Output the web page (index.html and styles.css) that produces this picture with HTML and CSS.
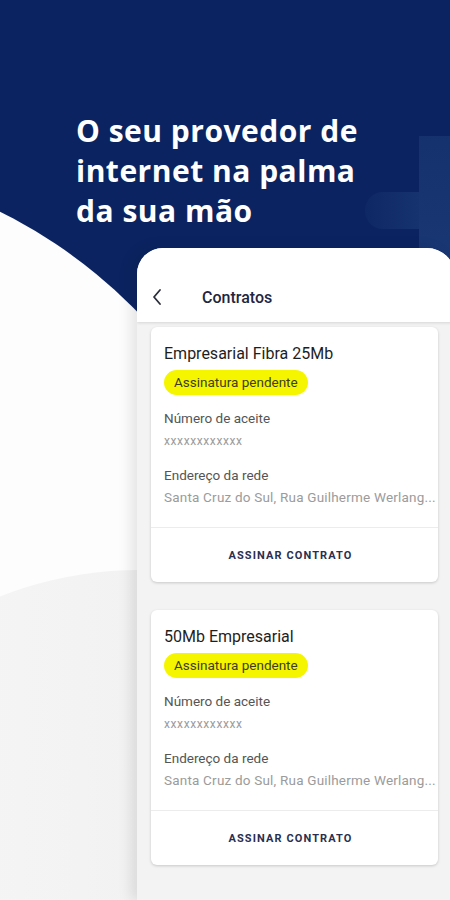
FILE: index.html
```html
<!DOCTYPE html>
<html lang="pt-BR">
<head>
<meta charset="utf-8">
<title>Contratos</title>
<link rel="stylesheet" href="styles.css">
</head>
<body>
<div class="screen">
  <div class="bg-circle"></div>
  <div class="bg-soft"></div>
  <div class="plus-v"></div>
  <div class="plus-h"></div>

  <h1 class="headline">O seu provedor de<br>internet na palma<br>da sua mão</h1>

  <div class="phone">
    <header class="app-bar">
      <svg class="back" width="12" height="18" viewBox="0 0 12 18"><polyline points="9,2 3,9 9,16" fill="none" stroke="#2a2d3a" stroke-width="1.8" stroke-linecap="round" stroke-linejoin="round"/></svg>
      <span class="app-title">Contratos</span>
    </header>
    <div class="content">
      <article class="card">
        <div class="card-body">
          <div class="card-title">Empresarial Fibra 25Mb</div>
          <span class="badge">Assinatura pendente</span>
          <div class="label first">Número de aceite</div>
          <div class="value small">xxxxxxxxxxxx</div>
          <div class="label">Endereço da rede</div>
          <div class="value addr">Santa Cruz do Sul, Rua Guilherme Werlang...</div>
        </div>
        <div class="card-action">ASSINAR CONTRATO</div>
      </article>
      <article class="card">
        <div class="card-body">
          <div class="card-title">50Mb Empresarial</div>
          <span class="badge">Assinatura pendente</span>
          <div class="label first">Número de aceite</div>
          <div class="value small">xxxxxxxxxxxx</div>
          <div class="label">Endereço da rede</div>
          <div class="value addr">Santa Cruz do Sul, Rua Guilherme Werlang...</div>
        </div>
        <div class="card-action">ASSINAR CONTRATO</div>
      </article>
    </div>
  </div>
</div>
</body>
</html>
```
FILE: styles.css
```css
* { box-sizing: border-box; }
html, body { margin: 0; padding: 0; }
body { width: 450px; height: 900px; overflow: hidden; background: #0b2461; }

.screen {
  position: relative;
  width: 450px;
  height: 900px;
  overflow: hidden;
  background: #0b2461;
  display: flex;
  flex-direction: column;
}

.bg-circle {
  position: absolute;
  left: -739px;
  top: 158px;
  width: 1022px;
  height: 1022px;
  border-radius: 50%;
  background: #fdfdfd;
}
.bg-soft {
  position: absolute;
  left: -160px;
  top: 570px;
  width: 600px;
  height: 460px;
  border-radius: 50%;
  background: linear-gradient(90deg, #f7f7f7 0%, #f1f1f1 60%, #e8e8e8 100%);
}
.plus-v {
  position: absolute;
  left: 419px;
  top: 136px;
  width: 40px;
  height: 130px;
  background: linear-gradient(180deg, rgba(60,100,160,0.20), rgba(60,100,160,0.30));
}
.plus-h {
  position: absolute;
  left: 365px;
  top: 192px;
  width: 54px;
  height: 37px;
  border-radius: 18px 0 0 18px;
  background: linear-gradient(90deg, rgba(60,100,160,0.06), rgba(60,100,160,0.22));
}

.headline {
  position: relative;
  margin: 0;
  padding: 111px 0 0 76px;
  font-family: "Open Sans", "DejaVu Sans", sans-serif;
  font-weight: 700;
  font-size: 30px;
  line-height: 40px;
  color: #ffffff;
  letter-spacing: 0.5px;
}

.phone {
  position: relative;
  margin: 17px 0 0 137px;
  width: 318px;
  flex: 1;
  background: #f3f3f3;
  border-radius: 26px 28px 0 0;
  overflow: hidden;
  box-shadow: -6px 0 14px rgba(0,0,0,0.10);
  font-family: Roboto, "Liberation Sans", sans-serif;
}

.app-bar {
  height: 74px;
  padding-top: 24px;
  background: #ffffff;
  display: flex;
  align-items: center;
  box-shadow: 0 1px 3px rgba(0,0,0,0.12);
  position: relative;
  z-index: 1;
}
.app-bar .back { margin-left: 14px; }
.app-title {
  margin-left: 39px;
  font-size: 16px;
  font-weight: 500;
  color: #1f2540;
}

.content {
  padding: 5px 17px 0 14px;
  display: flex;
  flex-direction: column;
  gap: 28px;
}

.card {
  background: #ffffff;
  border-radius: 6px;
  box-shadow: 0 1px 3px rgba(0,0,0,0.18);
}
.card-body {
  padding: 17px 4px 21px 13px;
  border-bottom: 1px solid #ececec;
}
.card-title {
  font-size: 16px;
  line-height: 20px;
  color: #1e1e1e;
}
.badge {
  display: inline-block;
  margin-top: 6px;
  height: 25px;
  line-height: 25px;
  padding: 0 10px;
  border-radius: 13px;
  background: #f6f500;
  color: #3d3d22;
  font-size: 13.5px;
}
.label {
  margin-top: 17px;
  font-size: 13.5px;
  line-height: 18px;
  color: #555555;
}
.label.first { margin-top: 14px; }
.value {
  color: #9b9b9b;
  white-space: nowrap;
}
.value.small {
  margin-top: 6px;
  font-size: 12px;
  line-height: 16px;
  letter-spacing: 0.6px;
}
.value.addr {
  margin-top: 4px;
  font-size: 13.5px;
  line-height: 18px;
  letter-spacing: 0.2px;
}
.card-action {
  height: 54px;
  display: flex;
  align-items: center;
  justify-content: center;
  padding-right: 8px;
  font-size: 11px;
  font-weight: 700;
  letter-spacing: 1.1px;
  color: #2a2f4f;
}
```
